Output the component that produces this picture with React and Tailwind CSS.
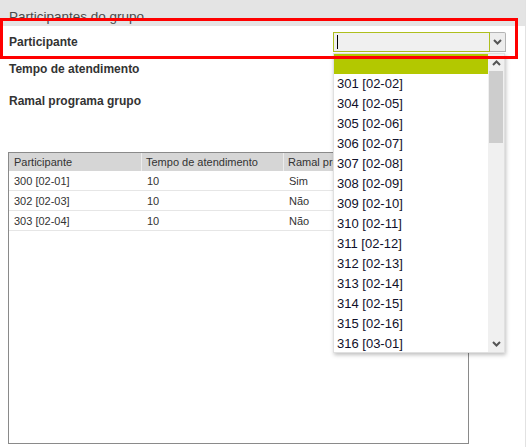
import React from "react";

const options = [
  "",
  "301 [02-02]",
  "304 [02-05]",
  "305 [02-06]",
  "306 [02-07]",
  "307 [02-08]",
  "308 [02-09]",
  "309 [02-10]",
  "310 [02-11]",
  "311 [02-12]",
  "312 [02-13]",
  "313 [02-14]",
  "314 [02-15]",
  "315 [02-16]",
  "316 [03-01]",
];

const rows = [
  ["300 [02-01]", "10", "Sim"],
  ["302 [02-03]", "10", "Não"],
  ["303 [02-04]", "10", "Não"],
];

function Chevron({ up = false, className = "" }) {
  return (
    <svg width="9" height="6" viewBox="0 0 9 6" className={className}>
      <path
        d={up ? "M1 5 L4.5 1.5 L8 5" : "M1 1 L4.5 4.5 L8 1"}
        fill="none"
        stroke="#555"
        strokeWidth="2"
      />
    </svg>
  );
}

export default function App() {
  return (
    <div className="relative w-[531px] h-[447px] overflow-hidden bg-white font-['Liberation_Sans',Arial,sans-serif]">
      <div className="w-[526px] h-full border-r border-[#e2e2e2]">
        {/* titulo do painel */}
        <div className="h-[26px] bg-[#e4e4e4] pl-[9px] pt-[3px] text-[13.5px] leading-[28px] text-[#4a4a4a] whitespace-nowrap">
          Participantes do grupo
        </div>

        {/* campos */}
        <div className="flex items-center h-[32px] pl-[9px]">
          <span className="w-[324px] text-[12px] font-bold text-[#333]">Participante</span>
          <div className="flex h-[20px]">
            <div className="w-[157px] h-full bg-[#f0f0f0] border border-[#aebf1e] flex items-center pl-[3px]">
              <div className="w-px h-[14px] bg-black" />
            </div>
            <div className="w-[16px] h-full bg-[#ededed] border border-l-0 border-[#b4b4b4] rounded-tr-[2px] flex items-center justify-center">
              <Chevron />
            </div>
          </div>
        </div>
        <div className="flex items-center h-[22px] pl-[9px] text-[12px] font-bold text-[#333]">
          Tempo de atendimento
        </div>
        <div className="flex items-center h-[22px] mt-[10px] pl-[9px] text-[12px] font-bold text-[#333]">
          Ramal programa grupo
        </div>

        {/* tabela */}
        <div className="ml-[8px] mt-[40px] w-[461px] h-[292px] border border-[#8a8a8a] text-[11px] text-[#333]">
          <div className="flex h-[18px] bg-[#d6d6d6] leading-[18px]">
            <div className="w-[133px] pl-[5px] border-r border-[#ececec]">Participante</div>
            <div className="w-[142px] pl-[4px] border-r border-[#ececec]">Tempo de atendimento</div>
            <div className="w-[49px] pl-[4px] overflow-hidden whitespace-nowrap">Ramal programa grupo</div>
          </div>
          {rows.map((r) => (
            <div key={r[0]} className="flex h-[20px] leading-[20px] border-b border-[#e6e6e6]">
              <div className="w-[133px] pl-[5px]">{r[0]}</div>
              <div className="w-[142px] pl-[5px]">{r[1]}</div>
              <div className="flex-1 pl-[5px]">{r[2]}</div>
            </div>
          ))}
        </div>
      </div>

      {/* lista aberta do combo */}
      <div className="absolute left-[333px] top-[53px] w-[172px] h-[300px] flex bg-white shadow-[1px_2px_4px_rgba(0,0,0,0.25)] border border-[#e0e0e0]">
        <div className="flex-1">
          {options.map((o, i) => (
            <div
              key={i}
              className={`h-[20px] leading-[20px] pl-[3px] text-[13px] text-[#10102a] ${i === 0 ? "bg-[#b3c800]" : ""}`}
            >
              {o}
            </div>
          ))}
        </div>
        <div className="w-[16px] h-full bg-[#f0f0f0] flex flex-col items-center">
          <div className="h-[17px] flex items-center justify-center">
            <Chevron up />
          </div>
          <div className="w-[14px] h-[72px] bg-[#cdcdcd]" />
          <div className="flex-1" />
          <div className="h-[17px] flex items-center justify-center">
            <Chevron />
          </div>
        </div>
      </div>

      {/* destaque vermelho */}
      <div className="absolute left-0 top-[18px] w-[518px] h-[41px] border-[3px] border-[#ff0000] pointer-events-none" />
    </div>
  );
}
